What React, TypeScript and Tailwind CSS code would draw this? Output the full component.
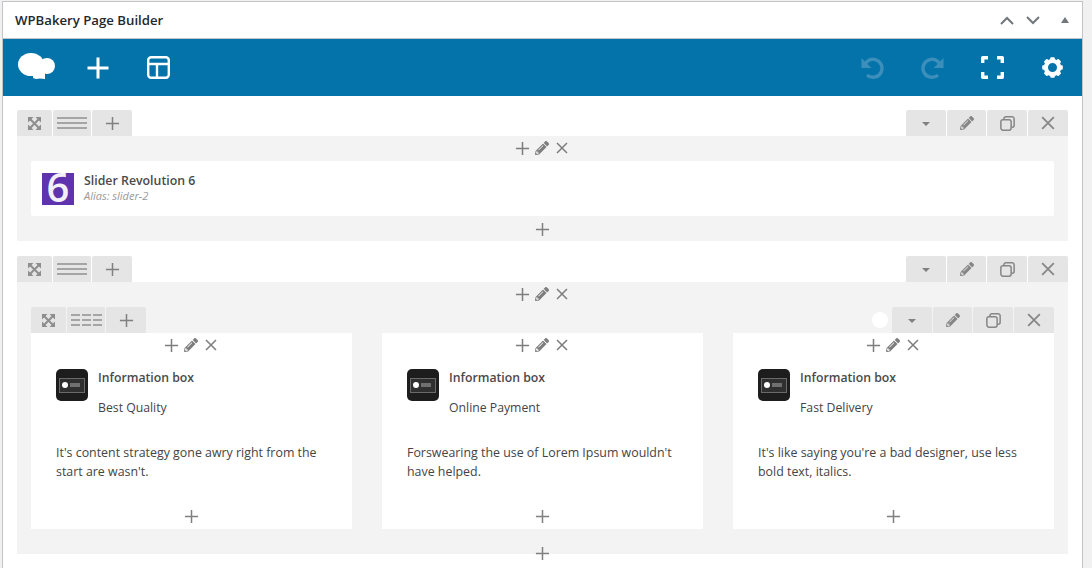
import React from 'react';
import { FaPencilAlt } from 'react-icons/fa';

const font = { fontFamily: '"Open Sans", sans-serif' };

function PlusIcon({ size = 16, weight = 1.6, className = '' }: { size?: number; weight?: number; className?: string }) {
  return (
    <svg width={size} height={size} viewBox="0 0 16 16" className={className}>
      <path d="M8 1v14M1 8h14" stroke="currentColor" strokeWidth={weight} fill="none" />
    </svg>
  );
}

function CloseIcon({ size = 12, className = '' }: { size?: number; className?: string }) {
  return (
    <svg width={size} height={size} viewBox="0 0 12 12" className={className}>
      <path d="M1 1l10 10M11 1L1 11" stroke="currentColor" strokeWidth="1.5" fill="none" />
    </svg>
  );
}

function ExpandIcon() {
  return (
    <svg width="13" height="13" viewBox="0 0 13 13" className="text-[#8e8e8e]">
      <path d="M0 0h5.5L0 5.5zM13 0v5.5L7.5 0zM0 13V7.5L5.5 13zM13 13H7.5L13 7.5z" fill="currentColor" />
      <path d="M2 2l9 9M11 2l-9 9" stroke="currentColor" strokeWidth="2" fill="none" />
    </svg>
  );
}

function CopyIcon() {
  return (
    <svg width="15" height="15" viewBox="0 0 14 14" fill="none" stroke="currentColor" strokeWidth="1.4">
      <rect x="0.8" y="3.4" width="9.6" height="9.8" rx="2" />
      <path d="M3.6 3.2V2.6A1.8 1.8 0 0 1 5.4.8h6a1.8 1.8 0 0 1 1.8 1.8v6a1.8 1.8 0 0 1-1.8 1.8h-.8" />
    </svg>
  );
}

function GearIcon() {
  const teeth = [0, 45, 90, 135, 180, 225, 270, 315];
  return (
    <svg width="21" height="21" viewBox="0 0 21 21" className="ml-[38px]">
      <circle cx="10.5" cy="10.5" r="6.6" fill="none" stroke="white" strokeWidth="4.2" />
      {teeth.map((deg) => (
        <rect key={deg} x="8.2" y="0.2" width="4.6" height="4" rx="1" fill="white" transform={`rotate(${deg} 10.5 10.5)`} />
      ))}
    </svg>
  );
}

function Tab({ w, children }: { w: string; children: React.ReactNode }) {
  return (
    <div className={`${w} h-[26px] flex items-center justify-center bg-[#e5e5e5] rounded-t-[2px] text-[#868686]`}>
      {children}
    </div>
  );
}

function RowToolbar({ columns = false, dot = false }: { columns?: boolean; dot?: boolean }) {
  return (
    <div className="flex justify-between h-[26px]">
      <div className="flex gap-px">
        <Tab w="w-[35px]"><ExpandIcon /></Tab>
        <Tab w="w-[38px]">
          {columns ? (
            <div className="flex gap-[2px]">
              {[0, 1, 2].map((i) => (
                <div key={i} className="w-[9px] flex flex-col gap-[3px]">
                  <div className="h-[2px] bg-[#a5a5a5]" />
                  <div className="h-[2px] bg-[#a5a5a5]" />
                  <div className="h-[2px] bg-[#a5a5a5]" />
                </div>
              ))}
            </div>
          ) : (
            <div className="w-[30px] flex flex-col gap-[3px]">
              <div className="h-[2px] bg-[#a5a5a5]" />
              <div className="h-[2px] bg-[#a5a5a5]" />
              <div className="h-[2px] bg-[#a5a5a5]" />
            </div>
          )}
        </Tab>
        <Tab w="w-[40px]"><PlusIcon size={15} className="text-[#808080]" /></Tab>
      </div>
      <div className="flex gap-px items-center">
        {dot && <div className="w-4 h-4 rounded-full bg-white mr-[3px]" />}
        <Tab w="w-[40px]">
          <div className="w-0 h-0 mt-[2px] border-x-[4px] border-x-transparent border-t-[4px] border-t-[#808080]" />
        </Tab>
        <Tab w="w-[39px]"><FaPencilAlt size={14} /></Tab>
        <Tab w="w-[40px]"><CopyIcon /></Tab>
        <Tab w="w-[40px]"><CloseIcon size={14} /></Tab>
      </div>
    </div>
  );
}

function ElementControls() {
  return (
    <div className="flex items-center justify-center h-[25px] pb-px pr-[2px] text-[#7d7d7d]">
      <PlusIcon size={15} />
      <FaPencilAlt size={14} className="ml-[5px]" />
      <CloseIcon size={12} className="ml-[7px]" />
    </div>
  );
}

function AddRow({ h, className = '' }: { h: string; className?: string }) {
  return (
    <div className={`${h} flex justify-center text-[#808080] ${className}`}>
      <PlusIcon size={15} />
    </div>
  );
}

function InfoIcon() {
  return (
    <div className="w-8 h-8 rounded-[5px] bg-[#1d1d1d] flex items-center justify-center shrink-0">
      <div className="w-[26px] h-[15px] border border-[#6a6a6a] bg-[#2f2f2f] flex items-center gap-[2px] px-[2px]">
        <div className="w-[6px] h-[6px] rounded-full bg-white" />
        <div className="flex-1 h-[4px] bg-[#6f6f6f] mr-[2px]" />
      </div>
    </div>
  );
}

function InfoColumn({ subtitle, text }: { subtitle: string; text: string }) {
  return (
    <div className="flex-1 bg-white h-[196px] flex flex-col">
      <ElementControls />
      <div className="px-[25px] pt-[11px] flex-1">
        <div className="flex gap-[10px]">
          <InfoIcon />
          <div className="text-[12.25px] text-[#444444]">
            <div className="font-semibold leading-[18px] text-[#4a4a4a]">Information box</div>
            <div className="mt-[12px] leading-[18px]">{subtitle}</div>
          </div>
        </div>
        <p className="mt-[26px] text-[12.4px] leading-[19px] text-[#444444]">{text}</p>
      </div>
      <AddRow h="h-[26px]" className="pt-[6px]" />
    </div>
  );
}

export default function App() {
  return (
    <div className="h-[568px] w-[1092px] overflow-hidden bg-[#f1f1f1] pt-px pl-[2px] pr-[9px]" style={font}>
      <div className="border-x border-t border-[#c3c4c7] h-full bg-white">
        <div className="h-[37px] flex items-center justify-between pl-3 pr-[13px] pt-[2px] border-b border-[#c3c4c7]">
          <h2 className="text-[13.2px] font-semibold text-[#23282d]">WPBakery Page Builder</h2>
          <div className="flex items-center text-[#72777c] pb-[2px]">
            <svg width="14" height="9" viewBox="0 0 14 9" fill="none" stroke="currentColor" strokeWidth="2">
              <path d="M1 8l6-6 6 6" />
            </svg>
            <svg width="14" height="9" viewBox="0 0 14 9" fill="none" stroke="currentColor" strokeWidth="2" className="ml-[12px]">
              <path d="M1 1l6 6 6-6" />
            </svg>
            <div className="ml-[21px] w-0 h-0 border-x-[4.5px] border-x-transparent border-b-[6px] border-b-[#72777c]" />
          </div>
        </div>
        <div className="h-[57px] bg-[#0473aa] flex items-center justify-between pl-[15px] pr-[19px]">
          <div className="flex items-center text-white">
            <svg width="37" height="27" viewBox="0 0 37 27" fill="white" className="mb-[2px]">
              <ellipse cx="13" cy="11.5" rx="13" ry="11.5" />
              <circle cx="29" cy="13" r="8" />
              <path d="M12 14h15v12l-5-.5-4 .5-3-1v-3z" />
            </svg>
            <PlusIcon size={24} weight={2} className="ml-[31px]" />
            <svg width="23" height="23" viewBox="0 0 23 23" fill="none" stroke="white" strokeWidth="2.4" className="ml-[37px]">
              <rect x="1.2" y="1.2" width="20.6" height="20.6" rx="3" />
              <path d="M1 8h21M10 8v14" />
            </svg>
          </div>
          <div className="flex items-center">
            <svg width="24" height="24" viewBox="0 0 24 24" fill="none" stroke="#3c8fbb" strokeWidth="3.4">
              <path d="M4 12a9 9 0 1 1 3 7" />
              <path d="M1.5 2v10h10z" fill="#3c8fbb" stroke="none" />
            </svg>
            <svg width="24" height="24" viewBox="0 0 24 24" fill="none" stroke="#3c8fbb" strokeWidth="3.4" className="ml-[37px]">
              <path d="M20 12a9 9 0 1 0-3 7" />
              <path d="M22.5 2v10h-10z" fill="#3c8fbb" stroke="none" />
            </svg>
            <svg width="23" height="23" viewBox="0 0 23 23" fill="none" stroke="white" strokeWidth="3.4" strokeLinejoin="round" className="ml-[36px]">
              <path d="M1.7 7V1.7H7M16 1.7h5.3V7M21.3 16v5.3H16M7 21.3H1.7V16" />
            </svg>
            <GearIcon />
          </div>
        </div>
        <div className="px-[14px] pt-[14px]">
          <RowToolbar />
          <div className="h-[105px] bg-[#f3f3f3] px-[14px]">
            <ElementControls />
            <div className="h-[55px] bg-white rounded-[2px] flex items-center pl-[11px] gap-[10px]">
              <div className="w-8 h-8 bg-[#5f33ae] flex items-center justify-center text-[#f4f0fb] text-[40px] font-semibold leading-[32px]">
                <span className="block -mt-[3px]">6</span>
              </div>
              <div className="mb-[2px]">
                <div className="text-[12.35px] font-semibold leading-[16px] text-[#4a4a4a]">Slider Revolution 6</div>
                <div className="text-[11px] italic leading-[14px] text-[#999999]">Alias: slider-2</div>
              </div>
            </div>
            <AddRow h="h-[25px]" className="pt-[6px]" />
          </div>
          <div className="mt-[15px]">
            <RowToolbar />
            <div className="h-[272px] bg-[#f3f3f3] px-[14px]">
              <ElementControls />
              <RowToolbar columns dot />
              <div className="flex gap-[30px]">
                <InfoColumn subtitle="Best Quality" text="It's content strategy gone awry right from the start are wasn't." />
                <InfoColumn subtitle="Online Payment" text="Forswearing the use of Lorem Ipsum wouldn't have helped." />
                <InfoColumn subtitle="Fast Delivery" text="It's like saying you're a bad designer, use less bold text, italics." />
              </div>
              <AddRow h="h-[25px]" className="pt-[17px]" />
            </div>
          </div>
        </div>
      </div>
    </div>
  );
}
